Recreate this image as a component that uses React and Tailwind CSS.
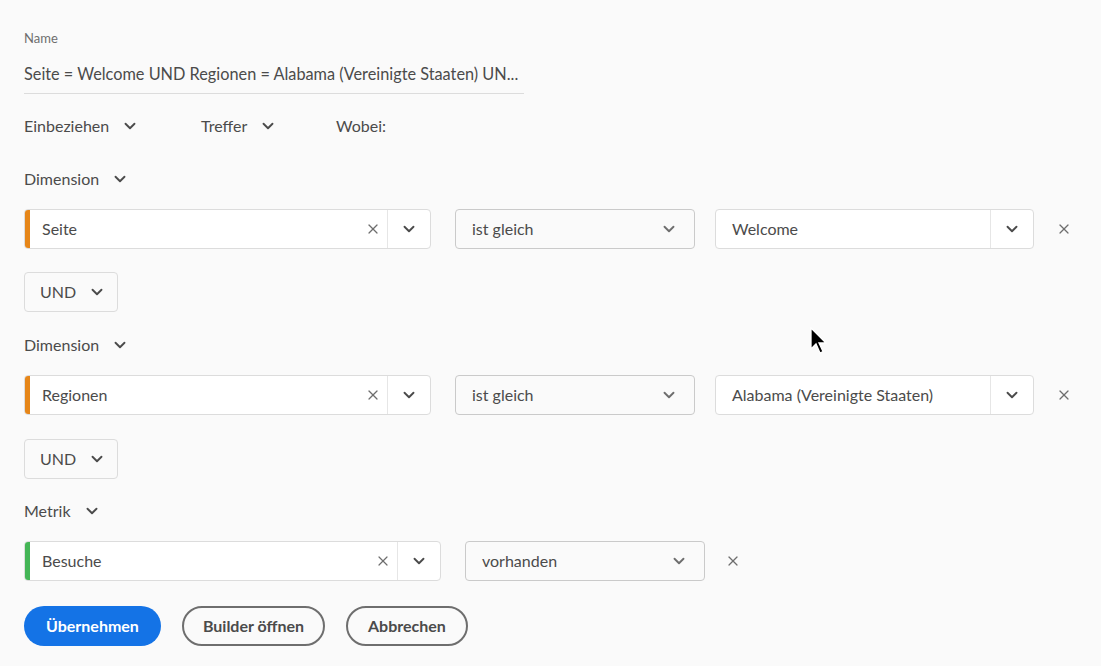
import { ChevronDown, X } from 'lucide-react'

const font = { fontFamily: 'Lato, "Noto Sans", sans-serif' }

function Caret({ className = '' }) {
  return <ChevronDown className={`w-[18px] h-[18px] text-[#4b4b4b] ${className}`} strokeWidth={2.5} />
}

function ComboField({ value, stripe, width }) {
  return (
    <div className={`flex h-10 ${width} rounded-[4px] border border-[#dcdcdc] bg-white overflow-hidden`}>
      <div className={`w-[5px] ${stripe}`} />
      <div className="flex-1 flex items-center pl-3 pr-[6px] text-[16px] text-[#4b4b4b]">
        <span className="flex-1">{value}</span>
        <X className="w-4 h-4 text-[#6e6e6e]" strokeWidth={1.8} />
      </div>
      <div className="w-[43px] flex items-center justify-center border-l border-[#e6e6e6]">
        <Caret />
      </div>
    </div>
  )
}

function Picker({ value, width }) {
  return (
    <div className={`flex h-10 ${width} items-center justify-between rounded-[4px] border border-[#cacaca] pl-4 pr-4 text-[16px] text-[#4b4b4b]`}>
      <span>{value}</span>
      <Caret className="text-[#6e6e6e]" />
    </div>
  )
}

function ValueField({ value }) {
  return (
    <div className="flex h-10 w-[319px] rounded-[4px] border border-[#dcdcdc] bg-white overflow-hidden">
      <div className="flex-1 flex items-center pl-4 text-[16px] text-[#4b4b4b]">{value}</div>
      <div className="w-[43px] flex items-center justify-center border-l border-[#e6e6e6]">
        <Caret />
      </div>
    </div>
  )
}

function Label({ text }) {
  return (
    <div className="flex items-center gap-3 h-6 text-[16px] text-[#4b4b4b]">
      <span>{text}</span>
      <Caret />
    </div>
  )
}

function AndButton() {
  return (
    <div className="flex h-10 w-[94px] items-center gap-3 rounded-[4px] border border-[#dcdcdc] pl-[15px] text-[16px] text-[#4b4b4b]">
      <span>UND</span>
      <Caret />
    </div>
  )
}

function RemoveX() {
  return <X className="w-4 h-4 text-[#6e6e6e]" strokeWidth={1.8} />
}

export default function App() {
  return (
    <div style={font} className="relative w-[1101px] h-[666px] bg-[#fafafa] overflow-hidden px-6 pt-[30px]">
      <div className="text-[13px] text-[#6e6e6e] leading-4">Name</div>
      <div className="mt-[18px] w-[500px] border-b border-[#dcdcdc] pb-[9px] text-[16.3px] text-[#4b4b4b] leading-5">
        Seite = Welcome UND Regionen = Alabama (Vereinigte Staaten) UN...
      </div>

      <div className="mt-[20px] flex items-center h-6 text-[16px] text-[#4b4b4b]">
        <div className="flex items-center gap-3 w-[177px]">
          <span>Einbeziehen</span>
          <Caret />
        </div>
        <div className="flex items-center gap-3 w-[135px]">
          <span>Treffer</span>
          <Caret />
        </div>
        <span>Wobei:</span>
      </div>

      <div className="mt-[29px]"><Label text="Dimension" /></div>
      <div className="mt-[18px] flex items-center">
        <ComboField value="Seite" stripe="bg-[#e68619]" width="w-[407px]" />
        <div className="ml-[24px]"><Picker value="ist gleich" width="w-[240px]" /></div>
        <div className="ml-[20px]"><ValueField value="Welcome" /></div>
        <div className="ml-[22px]"><RemoveX /></div>
      </div>
      <div className="mt-[23px]"><AndButton /></div>

      <div className="mt-[21px]"><Label text="Dimension" /></div>
      <div className="mt-[18px] flex items-center">
        <ComboField value="Regionen" stripe="bg-[#e68619]" width="w-[407px]" />
        <div className="ml-[24px]"><Picker value="ist gleich" width="w-[240px]" /></div>
        <div className="ml-[20px]"><ValueField value="Alabama (Vereinigte Staaten)" /></div>
        <div className="ml-[22px]"><RemoveX /></div>
      </div>
      <div className="mt-[24px]"><AndButton /></div>

      <div className="mt-[20px]"><Label text="Metrik" /></div>
      <div className="mt-[18px] flex items-center">
        <ComboField value="Besuche" stripe="bg-[#44b556]" width="w-[417px]" />
        <div className="ml-[24px]"><Picker value="vorhanden" width="w-[240px]" /></div>
        <div className="ml-[20px]"><RemoveX /></div>
      </div>

      <div className="mt-[25px] flex items-center gap-[21px]">
        <button className="h-10 px-[22px] rounded-full bg-[#1473e6] text-white text-[16px] font-bold">Übernehmen</button>
        <button className="h-10 px-[19px] rounded-full border-2 border-[#6e6e6e] text-[#4b4b4b] text-[16px] font-bold">Builder öffnen</button>
        <button className="h-10 px-[20px] rounded-full border-2 border-[#6e6e6e] text-[#4b4b4b] text-[16px] font-bold">Abbrechen</button>
      </div>

      <svg className="absolute left-[810px] top-[327px]" width="20" height="30" viewBox="0 0 20 30">
        <path d="M1 1 L1 22 L6 17 L10 26 L13 24.5 L9 16 L16 16 Z" fill="#000" stroke="#fff" strokeWidth="1.3" />
      </svg>
    </div>
  )
}
